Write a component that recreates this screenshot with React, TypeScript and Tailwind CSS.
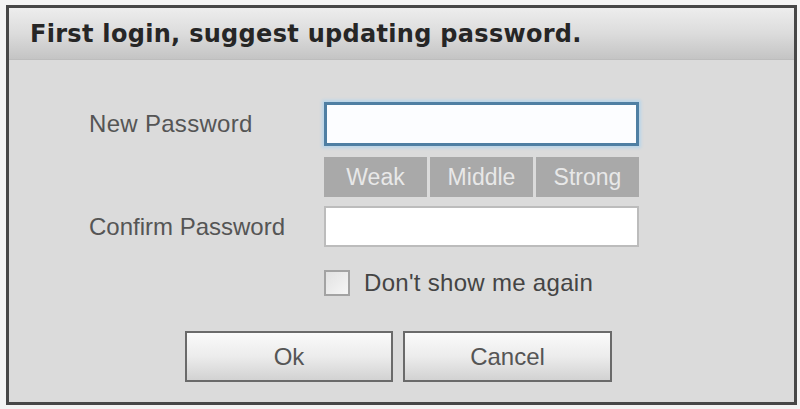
import { useState } from "react";

const Strength = ["Weak", "Middle", "Strong"];

const App = () => {
  const [hide, setHide] = useState(false);

  return (
    <div className="w-[800px] h-[409px] bg-[#f4f4f4] pt-[5px] pl-[6px] font-['Liberation_Sans',Arial,sans-serif]">
      <div className="w-[791px] h-[400px] border-[3px] border-[#474747] bg-[#dbdbdb] flex flex-col">
        {/* title bar */}
        <div className="h-[52px] shrink-0 flex items-center pl-[21px] bg-gradient-to-b from-[#ededed] via-[#dcdcdc] to-[#c4c4c4] border-b border-[#bdbdbd]">
          <h1 className="font-['DejaVu_Sans',Verdana,sans-serif] font-bold text-[24px] tracking-[0.3px] text-[#262626]">
            First login, suggest updating password.
          </h1>
        </div>

        {/* form */}
        <div className="flex flex-col pt-[42px] pl-[80px] pr-[6px]">
          <div className="flex items-center">
            <label className="w-[235px] text-[24px] text-[#555] tracking-[0.3px]">New Password</label>
            <input
              type="password"
              className="w-[315px] h-[44px] bg-[#fcfdff] border-[3px] border-[#4f7fa3] shadow-[0_0_3px_2px_#b9d6ea] outline-none px-2"
            />
          </div>

          <div className="flex mt-[11px] ml-[235px] w-[315px] h-[40px] gap-[3px]">
            {Strength.map((s) => (
              <div
                key={s}
                className="flex-1 bg-[#a9a9a9] text-[#e8e8e8] text-[23px] flex items-center justify-center"
              >
                {s}
              </div>
            ))}
          </div>

          <div className="flex items-center mt-[9px]">
            <label className="w-[235px] text-[24px] text-[#555]">Confirm Password</label>
            <input
              type="password"
              className="w-[315px] h-[41px] bg-white border-2 border-[#bcbcbc] outline-none px-2"
            />
          </div>

          <label className="flex items-center mt-[18px] ml-[235px] gap-[14px] cursor-pointer">
            <span
              onClick={() => setHide(!hide)}
              className="w-[26px] h-[26px] border-2 border-[#a3a3a3] bg-gradient-to-br from-[#e2e2e2] to-[#f6f6f6] flex items-center justify-center text-[#444] text-[18px]"
            >
              {hide ? "✓" : ""}
            </span>
            <span className="text-[24px] text-[#444] tracking-[0.3px]">Don't show me again</span>
          </label>

          <div className="flex justify-center gap-[10px] mt-[30px] -ml-[80px]">
            <button className="w-[208px] h-[51px] border-2 border-[#6a6a6a] bg-gradient-to-b from-[#fafafa] via-[#ececec] to-[#d2d2d2] text-[24px] text-[#555]">
              Ok
            </button>
            <button className="w-[209px] h-[51px] border-2 border-[#6a6a6a] bg-gradient-to-b from-[#fafafa] via-[#ececec] to-[#d2d2d2] text-[24px] text-[#555]">
              Cancel
            </button>
          </div>
        </div>
      </div>
    </div>
  );
};

export default App;
